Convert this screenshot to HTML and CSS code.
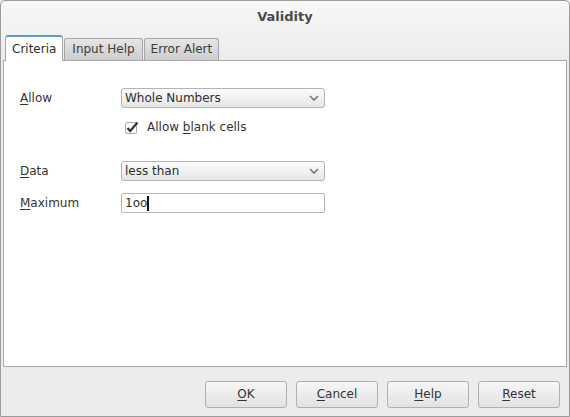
FILE: index.html
```html
<!DOCTYPE html>
<html>
<head>
<meta charset="utf-8">
<link rel="stylesheet" href="styles.css">
</head>
<body>
<div class="window">
  <div class="title">Validity</div>
  <div class="tabs">
    <div class="tab active">Criteria</div>
    <div class="tab">Input Help</div>
    <div class="tab narrow">Error Alert</div>
  </div>
  <div class="panel">
    <div class="row first">
      <div class="label"><u>A</u>llow</div>
      <div class="select"><span>Whole Numbers</span><svg class="chev" width="10" height="6" viewBox="0 0 10 6"><path d="M1 1 L5 5 L9 1" fill="none" stroke="#777" stroke-width="1.6"/></svg></div>
    </div>
    <div class="checkrow">
      <svg class="check" width="14" height="13" viewBox="0 0 14 13"><rect x="0.5" y="1.5" width="11" height="11" rx="1.5" fill="#fff" stroke="#aaa"/><path d="M2.5 7 L5.2 10 L12.5 1.5" fill="none" stroke="#333" stroke-width="2.2"/></svg>
      <span>Allow <u>b</u>lank cells</span>
    </div>
    <div class="row data">
      <div class="label"><u>D</u>ata</div>
      <div class="select"><span>less than</span><svg class="chev" width="10" height="6" viewBox="0 0 10 6"><path d="M1 1 L5 5 L9 1" fill="none" stroke="#777" stroke-width="1.6"/></svg></div>
    </div>
    <div class="row max">
      <div class="label"><u>M</u>aximum</div>
      <div class="input"><span>1oo</span><i class="caret"></i></div>
    </div>
  </div>
  <div class="buttons">
    <div class="btn"><u>O</u>K</div>
    <div class="btn"><u>C</u>ancel</div>
    <div class="btn"><u>H</u>elp</div>
    <div class="btn"><u>R</u>eset</div>
  </div>
</div>
</body>
</html>
```

FILE: styles.css
```css
html, body {
  margin: 0;
  padding: 0;
  background: #ececec;
}
body {
  font-family: "DejaVu Sans", sans-serif;
  font-size: 12px;
  color: #3c3c3c;
}
u {
  text-decoration: underline;
  text-underline-offset: 2px;
}
.window {
  box-sizing: border-box;
  width: 570px;
  height: 417px;
  border: 1px solid #9c9c9c;
  border-radius: 5px 5px 0 0;
  background: linear-gradient(#f7f7f7 0, #ececec 60px, #ececec 100%);
  display: flex;
  flex-direction: column;
}
.title {
  height: 33px;
  line-height: 31px;
  text-align: center;
  font-weight: bold;
  font-size: 13px;
  color: #4a4a4a;
}
.tabs {
  display: flex;
  padding-left: 4px;
  height: 26px;
  align-items: flex-end;
  position: relative;
  z-index: 1;
}
.tab {
  box-sizing: border-box;
  height: 22px;
  padding: 0 7px;
  line-height: 20px;
  border: 1px solid #a6a6a6;
  border-bottom: none;
  border-radius: 3px 3px 0 0;
  background: linear-gradient(#e6e6e6, #cdcdcd);
  margin-right: 1px;
  color: #3c3c3c;
}
.tab.narrow {
  padding: 0 6px;
}
.tab.active {
  height: 26px;
  line-height: 24px;
  background: #fff;
  border-color: #a6a6a6;
  border-top: 2px solid #5d9ad5;
  padding: 0 6px;
  margin-bottom: -1px;
  color: #2f2f2f;
}
.panel {
  box-sizing: border-box;
  margin: 0 2px 0 2px;
  height: 307px;
  background: #fff;
  border: 1px solid #a8a8a8;
  padding: 27px 0 0 16px;
}
.row {
  display: flex;
  align-items: center;
  height: 20px;
}
.label {
  width: 101px;
  color: #333;
}
.select {
  box-sizing: border-box;
  width: 204px;
  height: 20px;
  border: 1px solid #b4b4b4;
  border-radius: 3px;
  background: linear-gradient(#fbfbfb, #e6e6e6);
  display: flex;
  align-items: center;
  justify-content: space-between;
  padding: 0 5px 0 3px;
  color: #2e2e2e;
}
.chev {
  display: block;
}
.checkrow {
  display: flex;
  align-items: center;
  height: 20px;
  margin-top: 9px;
  padding-left: 105px;
  color: #333;
}
.check {
  margin-right: 8px;
}
.data {
  margin-top: 24px;
}
.max {
  margin-top: 12px;
}
.input {
  box-sizing: border-box;
  width: 204px;
  height: 20px;
  border: 1px solid #b4b4b4;
  border-radius: 2px;
  background: #fff;
  display: flex;
  align-items: center;
  padding-left: 3px;
  color: #2e2e2e;
}
.caret {
  display: inline-block;
  width: 2px;
  height: 15px;
  background: #111;
}
.buttons {
  display: flex;
  justify-content: flex-end;
  gap: 9px;
  padding: 14px 9px 0 0;
}
.btn {
  box-sizing: border-box;
  width: 82px;
  height: 27px;
  border: 1px solid #b0b0b0;
  border-radius: 3px;
  background: linear-gradient(#f6f6f6, #e2e2e2);
  text-align: center;
  line-height: 25px;
  color: #333;
}
```
